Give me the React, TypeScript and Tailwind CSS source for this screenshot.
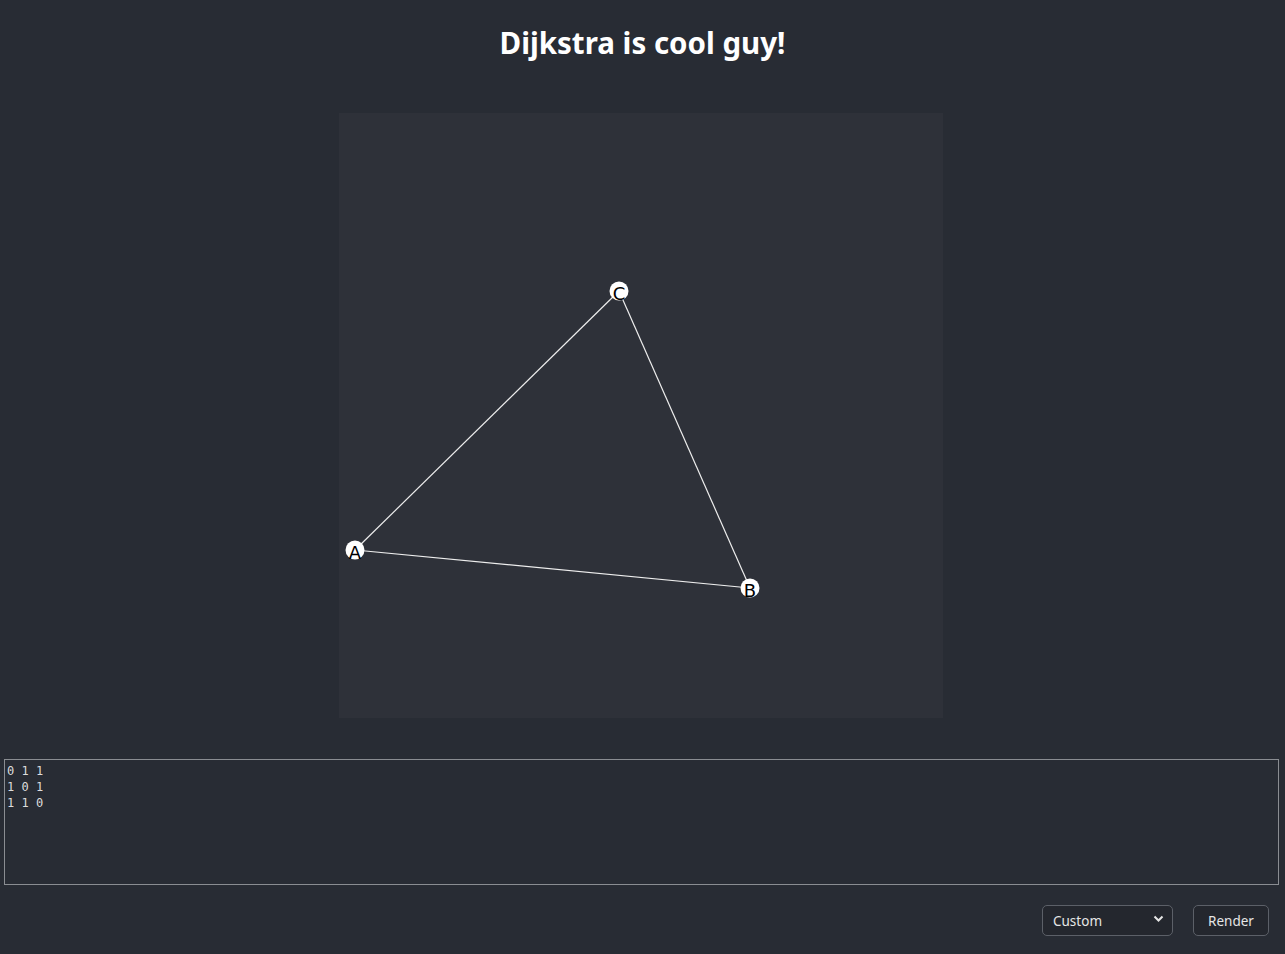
import React from "react";

type Node = { id: string; x: number; y: number };

const nodes: Node[] = [
  { id: "A", x: 16, y: 437 },
  { id: "B", x: 411, y: 475 },
  { id: "C", x: 280, y: 178 },
];

const edges: [number, number][] = [
  [0, 1],
  [0, 2],
  [1, 2],
];

const matrix = "0 1 1\n1 0 1\n1 1 0";

export default function App() {
  return (
    <div className="min-h-screen bg-[#282c34] text-white font-['Noto_Sans',sans-serif]">
      <h1 className="pt-[22px] text-center text-[29.5px] font-bold leading-[42px] text-white">
        Dijkstra is cool guy!
      </h1>

      <div className="mt-[49px] flex justify-center pr-[4px]">
        <svg width={604} height={605} className="block bg-[#2e3139]">
          {edges.map(([a, b]) => (
            <line
              key={`${a}-${b}`}
              x1={nodes[a].x}
              y1={nodes[a].y}
              x2={nodes[b].x}
              y2={nodes[b].y}
              stroke="#eeeeee"
              strokeWidth={1.2}
            />
          ))}
          {nodes.map((n) => (
            <g key={n.id}>
              <circle cx={n.x} cy={n.y} r={9.5} fill="#ffffff" />
              <text
                x={n.x}
                y={n.y + 9}
                textAnchor="middle"
                fontSize={18}
                fontFamily="'DejaVu Sans', sans-serif"
                fill="#000000"
              >
                {n.id}
              </text>
            </g>
          ))}
        </svg>
      </div>

      <div className="mt-[41px] px-1">
        <textarea
          className="block h-[126px] w-[1275px] resize-none border border-[#8a8d92] bg-[#282c34] px-[2px] py-[3px] font-['DejaVu_Sans_Mono',monospace] text-[12px] leading-[16px] text-[#dcdcdc] outline-none"
          defaultValue={matrix}
        />
      </div>

      <div className="mt-[20px] flex justify-end gap-[20px] pr-[16px]">
        <div className="relative">
          <select
            className="h-[31px] w-[131px] appearance-none rounded-[5px] border border-[#5c6068] bg-[#24272e] pl-[10px] pt-[2px] text-[13.5px] text-[#e6e6e6] outline-none"
            defaultValue="Custom"
          >
            <option>Custom</option>
          </select>
          <svg
            className="pointer-events-none absolute right-[9px] top-[10px]"
            width="11"
            height="8"
            viewBox="0 0 11 8"
          >
            <path d="M1.5 1.5 L5.5 5.5 L9.5 1.5" stroke="#e6e6e6" strokeWidth="2" fill="none" />
          </svg>
        </div>
        <button className="h-[31px] w-[76px] rounded-[5px] border border-[#5c6068] bg-[#24272e] pt-[2px] text-[13.5px] text-[#e6e6e6]">
          Render
        </button>
      </div>
    </div>
  );
}
